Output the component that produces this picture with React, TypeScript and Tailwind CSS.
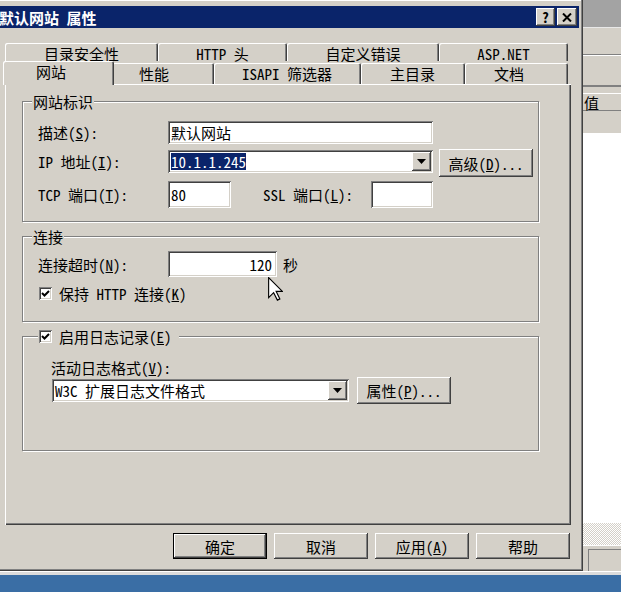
import type { ReactNode } from 'react';

const RAISED =
  'shadow-[inset_-1px_-1px_0_#404040,inset_1px_1px_0_#ffffff,inset_-2px_-2px_0_#808080,inset_2px_2px_0_#d4d0c8]';
const SUNKEN =
  'shadow-[inset_1px_1px_0_#808080,inset_-1px_-1px_0_#ffffff,inset_2px_2px_0_#404040,inset_-2px_-2px_0_#d4d0c8]';
const TAB =
  'shadow-[inset_1px_1px_0_#ffffff,inset_-1px_0_0_#404040,inset_-2px_0_0_#808080] rounded-t-[2px]';
const GROUP =
  'border border-[#808080] shadow-[inset_1px_1px_0_#ffffff,1px_1px_0_#ffffff]';

function Key({ k }: { k: string }) {
  return <span className="underline underline-offset-[1px]">{k}</span>;
}

function Button({ children, className = '', primary = false }: { children: ReactNode; className?: string; primary?: boolean }) {
  if (primary) {
    return (
      <div className={`border border-black ${className}`}>
        <div className={`${RAISED} h-full flex items-center justify-center bg-[#d4d0c8]`}>{children}</div>
      </div>
    );
  }
  return <div className={`${RAISED} flex items-center justify-center bg-[#d4d0c8] ${className}`}>{children}</div>;
}

function Field({ children, className = '' }: { children?: ReactNode; className?: string }) {
  return <div className={`${SUNKEN} bg-white flex items-center px-[3px] ${className}`}>{children}</div>;
}

function DropArrow() {
  return (
    <div className={`${RAISED} w-[19px] h-full flex items-center justify-center bg-[#d4d0c8]`}>
      <svg width="9" height="5" viewBox="0 0 9 5">
        <path d="M0 0H9L4.5 5Z" fill="#000" />
      </svg>
    </div>
  );
}

function Select({ children, className = '' }: { children: ReactNode; className?: string }) {
  return (
    <div className={`${SUNKEN} bg-white flex items-stretch p-[2px] ${className}`}>
      <div className="flex-1 flex items-center pl-[1px] overflow-hidden whitespace-nowrap">{children}</div>
      <DropArrow />
    </div>
  );
}

function Check() {
  return (
    <div className={`${SUNKEN} bg-white w-[13px] h-[13px] shrink-0 flex items-center justify-center`}>
      <svg width="9" height="9" viewBox="0 0 9 9">
        <path d="M1 4L3.5 6.5L8 2" stroke="#000" strokeWidth="2" fill="none" />
      </svg>
    </div>
  );
}

const backTabs = [
  { label: '目录安全性', w: 'w-[153px]' },
  { label: 'HTTP 头', w: 'w-[129px]' },
  { label: '自定义错误', w: 'w-[152px]' },
  { label: 'ASP.NET', w: 'w-[129px]' },
];

// front row labels sit left of centre in the reference, so pad them explicitly
const frontTabs = [
  { label: '性能', w: 'w-[102px] pl-[27px]' },
  { label: 'ISAPI 筛选器', w: 'w-[147px] pl-[28px]' },
  { label: '主目录', w: 'w-[104px] pl-[29px]' },
  { label: '文档', w: 'w-[103px] pl-[29px]' },
];

function Dialog() {
  return (
    <div className="w-[583px] h-[571px] flex flex-col pt-[6px] pr-[4px] bg-[#d4d0c8] shadow-[inset_-1px_-1px_0_#404040,inset_-2px_-2px_0_#808080,inset_0_1px_0_#ffffff]">
      {/* title bar */}
      <div className="h-[22px] bg-[#0a246a] flex items-center pr-[2px]">
        <span className="-ml-[1px] font-bold text-white text-[15px]">默认网站 属性</span>
        <div className="ml-auto flex gap-[2px]">
          <div className={`${RAISED} w-[19px] h-[18px] bg-[#d4d0c8] flex items-center justify-center font-bold text-[14px] leading-none`}>
            ?
          </div>
          <div className={`${RAISED} w-[20px] h-[18px] bg-[#d4d0c8] flex items-center justify-center`}>
            <svg width="10" height="9" viewBox="0 0 10 9">
              <path d="M1 0.5L9 8.5M9 0.5L1 8.5" stroke="#000" strokeWidth="2" />
            </svg>
          </div>
        </div>
      </div>

      {/* tabs */}
      <div className="mt-[15px] ml-[5px] flex h-[18px]">
        {backTabs.map((t) => (
          <div key={t.label} className={`${TAB} ${t.w} flex items-center justify-center pt-[2px] leading-[15px]`}>
            {t.label}
          </div>
        ))}
      </div>
      <div className="ml-[5px] flex items-start h-[23px]">
        <div className={`${TAB} relative z-10 -ml-[2px] -mr-[2px] w-[111px] h-[24px] bg-[#d4d0c8] flex items-center pl-[33px] pb-[3px] leading-[15px]`}>
          网站
        </div>
        {frontTabs.map((t) => (
          <div key={t.label} className={`${TAB} ${t.w} mt-[2px] h-[21px] flex items-center leading-[15px]`}>
            {t.label}
          </div>
        ))}
      </div>

      {/* panel */}
      <div className="ml-[5px] w-[566px] h-[441px] pt-[9px] pl-[17px] shadow-[inset_1px_1px_0_#ffffff,inset_-1px_-1px_0_#404040,inset_-2px_-2px_0_#808080]">
        <fieldset className={`${GROUP} w-[517px] pb-[13px]`}>
          <legend className="ml-[9px] px-[1px] bg-[#d4d0c8] leading-[17px]">网站标识</legend>
          <div className="pl-[15px]">
            <div className="mt-[11px] flex items-center h-[23px]">
              <span className="w-[130px]">
                描述(<Key k="S" />):
              </span>
              <Field className="w-[265px] h-[23px]">默认网站</Field>
            </div>
            <div className="mt-[5px] flex items-start h-[28px]">
              <span className="w-[130px] h-[23px] mt-[1px] flex items-center">
                IP 地址(<Key k="I" />):
              </span>
              <Select className="w-[265px] h-[23px] mt-[1px]">
                <span className="bg-[#0a246a] text-white">10.1.1.245</span>
              </Select>
              <Button className="ml-[6px] w-[94px] h-[28px]">
                高级(<Key k="D" />)...
              </Button>
            </div>
            <div className="mt-[4px] flex items-center h-[27px]">
              <span className="w-[130px]">
                TCP 端口(<Key k="T" />):
              </span>
              <Field className="w-[63px] h-[27px] px-[2px]">80</Field>
              <span className="ml-[32px] w-[108px]">
                SSL 端口(<Key k="L" />):
              </span>
              <Field className="w-[62px] h-[27px]" />
            </div>
          </div>
        </fieldset>

        <fieldset className={`${GROUP} mt-[6px] w-[517px] pb-[19px]`}>
          <legend className="ml-[9px] px-[1px] bg-[#d4d0c8] leading-[17px]">连接</legend>
          <div className="pl-[15px]">
            <div className="mt-[6px] flex items-center h-[26px]">
              <span className="w-[130px]">
                连接超时(<Key k="N" />):
              </span>
              <Field className="w-[109px] h-[26px] justify-end pr-[5px]">120</Field>
              <span className="ml-[6px]">秒</span>
            </div>
            <div className="mt-[8px] h-[17px] flex items-center pl-[1px]">
              <Check />
              <span className="ml-[7px]">
                保持 HTTP 连接(<Key k="K" />)
              </span>
            </div>
          </div>
        </fieldset>

        <fieldset className={`${GROUP} mt-[6px] w-[517px] pb-[46px]`}>
          <legend className="ml-[15px] pl-[1px] pr-[7px] h-[17px] bg-[#d4d0c8] leading-[17px] flex items-center">
            <Check />
            <span className="ml-[7px]">
              启用日志记录(<Key k="E" />)
            </span>
          </legend>
          <div className="pl-[28px]">
            <div className="mt-[14px] h-[17px]">
              活动日志格式(<Key k="V" />):
            </div>
            <div className="mt-[1px] flex items-start pl-[1px]">
              <Select className="w-[297px] h-[23px] mt-[2px]">W3C 扩展日志文件格式</Select>
              <Button className="ml-[8px] w-[94px] h-[27px]">
                属性(<Key k="P" />)...
              </Button>
            </div>
          </div>
        </fieldset>
      </div>

      {/* buttons */}
      <div className="mt-[8px] flex justify-end gap-[7px] pr-[9px]">
        <Button primary className="w-[94px] h-[26px]">
          确定
        </Button>
        <Button className="w-[94px] h-[26px]">取消</Button>
        <Button className="w-[94px] h-[26px]">
          应用(<Key k="A" />)
        </Button>
        <Button className="w-[94px] h-[26px]">帮助</Button>
      </div>
    </div>
  );
}

function Backdrop() {
  return (
    <div className="flex-1 flex flex-col">
      <div className="h-[27px] bg-[#a3a3a3]" />
      <div className="h-[1px] bg-[#e8e8e8]" />
      <div className="h-[27px] border-b border-[#808080]" />
      <div className="h-[32px] border-t border-white border-b-2 border-b-[#808080]" />
      <div className="h-[6px]" />
      <div className="h-[18px] border-t border-white border-b border-b-[#808080] flex items-center pl-[1px]">值</div>
      <div className="h-[22px]" />
      <div className="flex-1 bg-white" />
      <div className="h-[22px] bg-[repeating-conic-gradient(#d4d0c8_0_25%,#ffffff_0_50%)] bg-[length:2px_2px]" />
      <div className="h-[26px] pt-[3px] border-t border-white">
        <div className="ml-[5px] h-full border-l border-t border-[#808080]" />
      </div>
    </div>
  );
}

function Cursor() {
  return (
    <svg className="absolute left-[268px] top-[277px]" width="15" height="25" viewBox="0 0 12 20">
      <path
        d="M0.5 0.5V16.5L4.5 12.5L7.5 18.5L9.5 17.5L6.5 11.5H11.5Z"
        fill="#ffffff"
        stroke="#000000"
        strokeWidth="0.9"
        strokeLinejoin="miter"
      />
    </svg>
  );
}

export default function App() {
  return (
    <div className="relative w-[621px] h-[592px] overflow-hidden bg-[#d4d0c8] font-['Noto_Sans_Mono_CJK_SC','Noto_Sans_CJK_SC',monospace] text-[15px] leading-[17px] text-black">
      <div className="flex h-[571px]">
        <Dialog />
        <Backdrop />
      </div>
      <div className="h-[4px] bg-[#dcdcdc] border-t border-white" />
      <div className="h-[17px] bg-[#3a6ea5]" />
      <Cursor />
    </div>
  );
}
